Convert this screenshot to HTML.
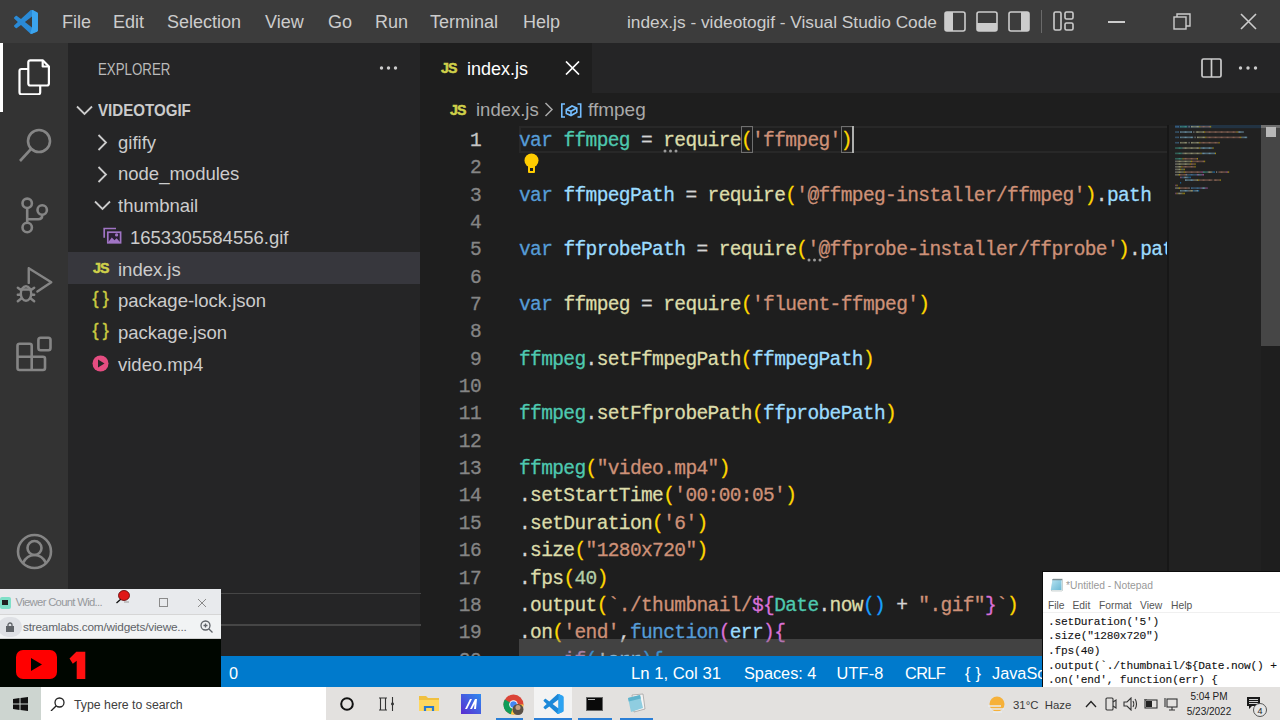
<!DOCTYPE html>
<html><head><meta charset="utf-8">
<style>
*{margin:0;padding:0;box-sizing:border-box}
html,body{width:1280px;height:720px;overflow:hidden;background:#1e1e1e;font-family:"Liberation Sans",sans-serif}
.a{position:absolute}
#title{left:0;top:0;width:1280px;height:43px;background:#3c3c3c}
.menu{top:0;height:42px;line-height:44px;font-size:18px;color:#cccccc;white-space:nowrap}
#act{left:0;top:43px;width:68px;height:613px;background:#333333}
#side{left:68px;top:43px;width:352px;height:613px;background:#252526}
.row{left:68px;width:352px;height:31.7px;line-height:31.7px;font-size:18.5px;color:#cccccc;white-space:nowrap;padding-top:2.1px}
#tabs{left:420px;top:43px;width:860px;height:50px;background:#252526}
#tab{left:420px;top:43px;width:172px;height:50px;background:#1e1e1e}
.code{font-family:"Liberation Mono",monospace;font-size:19.5px;letter-spacing:-0.61px;line-height:27.37px;-webkit-text-stroke:0.3px}
.code>div{white-space:pre;height:27.37px}
.ln{left:420px;width:61px;text-align:right;color:#858585}
.k{color:#569cd6}.t{color:#4ec9b0}.v{color:#9cdcfe}.f{color:#dcdcaa}.s{color:#ce9178}.p{color:#d4d4d4}.b1{color:#ffd700}.b2{color:#da70d6}.b3{color:#179fff}.n{color:#b5cea8}.c{color:#c586c0}
#status{left:0;top:656px;width:1280px;height:31px;background:#007acc}
.st{top:656px;height:31px;line-height:35px;font-size:16.3px;color:#ffffff;white-space:nowrap}
#task{left:0;top:687px;width:1280px;height:33px;background:#e3e1df}
</style></head><body>

<!-- title bar -->
<div id="title" class="a"></div>
<svg class="a" style="left:13.5px;top:9.5px" width="24" height="24" viewBox="0 0 100 100">
<path fill="#2a8ad6" d="M96 11 75 1c-2.4-1.2-5.3-.7-7.2 1.2L29 37.5 12.2 24.8c-1.6-1.2-3.8-1.1-5.2.2L1.5 30c-1.8 1.6-1.8 4.4 0 6L16 49.9 1.5 63.7c-1.8 1.6-1.8 4.4 0 6l5.5 5c1.5 1.3 3.7 1.4 5.2.2L29 62.2l38.8 35.4c1.9 1.9 4.8 2.4 7.2 1.2l21-10.1c2.2-1 3.6-3.3 3.6-5.7V16.8c0-2.5-1.4-4.7-3.6-5.8zM75 72.7 45.5 49.9 75 27z"/>
<path fill="#3ba4ee" d="M75 1c2.4-1.2 5.3-.7 7.2 1.2l14 6.8c2.2 1 3.6 3.3 3.6 5.7v70c0 2.5-1.4 4.7-3.6 5.8L75 99c-2.4 1.2-5.3.7-7.2-1.2L75 72.7V27z"/>
</svg>
<div class="a menu" style="left:62px">File</div>
<div class="a menu" style="left:113px">Edit</div>
<div class="a menu" style="left:167px">Selection</div>
<div class="a menu" style="left:265px">View</div>
<div class="a menu" style="left:328px">Go</div>
<div class="a menu" style="left:375px">Run</div>
<div class="a menu" style="left:430px">Terminal</div>
<div class="a menu" style="left:523px">Help</div>
<div class="a menu" style="left:627px;font-size:17.3px">index.js - videotogif - Visual Studio Code</div>
<!-- layout icons -->
<svg class="a" style="left:944px;top:11px" width="22" height="21" viewBox="0 0 22 21"><rect x="1" y="1" width="20" height="19" rx="2" fill="none" stroke="#cccccc" stroke-width="1.6"/><rect x="1" y="1" width="8" height="19" fill="#cccccc"/></svg>
<svg class="a" style="left:976px;top:11px" width="22" height="21" viewBox="0 0 22 21"><rect x="1" y="1" width="20" height="19" rx="2" fill="none" stroke="#cccccc" stroke-width="1.6"/><rect x="1" y="12" width="20" height="8" fill="#cccccc"/></svg>
<svg class="a" style="left:1008px;top:11px" width="22" height="21" viewBox="0 0 22 21"><rect x="1" y="1" width="20" height="19" rx="2" fill="none" stroke="#cccccc" stroke-width="1.6"/><rect x="13" y="1" width="8" height="19" fill="#cccccc"/></svg>
<div class="a" style="left:1041px;top:10px;width:1px;height:23px;background:#6a6a6a"></div>
<svg class="a" style="left:1053px;top:11px" width="22" height="20" viewBox="0 0 22 20"><rect x="1" y="1" width="7" height="18" rx="1.5" fill="none" stroke="#cccccc" stroke-width="1.6"/><rect x="12" y="1" width="8" height="7" rx="1.5" fill="none" stroke="#cccccc" stroke-width="1.6"/><rect x="12" y="12" width="8" height="7" rx="1.5" fill="none" stroke="#cccccc" stroke-width="1.6"/></svg>
<div class="a" style="left:1108px;top:21px;width:17px;height:1.5px;background:#cccccc"></div>
<svg class="a" style="left:1173px;top:13px" width="18" height="17" viewBox="0 0 18 17"><rect x="1" y="4" width="12" height="12" fill="none" stroke="#cccccc" stroke-width="1.4"/><path d="M4 4V1h13v12h-4" fill="none" stroke="#cccccc" stroke-width="1.4"/></svg>
<svg class="a" style="left:1240px;top:13px" width="17" height="17" viewBox="0 0 17 17"><path d="M1 1 16 16M16 1 1 16" stroke="#cccccc" stroke-width="1.6"/></svg>

<!-- activity bar -->
<div id="act" class="a"></div>
<div class="a" style="left:0;top:43px;width:3px;height:69px;background:#ffffff"></div>
<!-- explorer icon -->
<svg class="a" style="left:18px;top:59px" width="32" height="36" viewBox="0 0 32 36" fill="none" stroke="#ffffff" stroke-width="2.2" stroke-linejoin="round">
<path d="M12.3 1.3h12.4l6.2 6.2v17a2 2 0 0 1-2 2H12.3a2 2 0 0 1-2-2V3.3a2 2 0 0 1 2-2z"/><path d="M24.7 1.3v6.2h6.2"/><path d="M10.3 10H3.5a2 2 0 0 0-2 2v21.3a2 2 0 0 0 2 2h16.7a2 2 0 0 0 2-2v-6.8"/>
</svg>
<!-- search -->
<svg class="a" style="left:16px;top:126px" width="38" height="38" viewBox="0 0 38 38" fill="none" stroke="#858585" stroke-width="2.6">
<circle cx="23" cy="15" r="11"/><path d="M15 23 4 35"/>
</svg>
<!-- source control -->
<svg class="a" style="left:16px;top:193px" width="36" height="42" viewBox="0 0 36 42" fill="none" stroke="#858585" stroke-width="2.6">
<circle cx="11.2" cy="10.3" r="4.7"/><circle cx="11.2" cy="34.5" r="4.7"/><circle cx="26.2" cy="17" r="4.7"/><path d="M11.2 15v14.8"/><path d="M26.2 21.7v.8c0 2.5-1.5 3.7-4 3.7H11.2"/>
</svg>
<!-- run debug -->
<svg class="a" style="left:15px;top:265px" width="40" height="40" viewBox="0 0 40 40" fill="none" stroke="#858585" stroke-width="2.4" stroke-linejoin="round" stroke-linecap="round">
<path d="M13.75 3.3V17.9M13.75 3.3 36.3 17.2 22.4 26.6"/>
<ellipse cx="11" cy="28.5" rx="5.2" ry="7.3"/><path d="M6 24.5H16M2.8 22.8 6.3 25.3M2.8 29.7H5.8M2.8 36.3 6.3 33.5M19.2 22.8 15.7 25.3M19.2 29.7H16.2M19.2 36.3 15.7 33.5"/>
</svg>
<!-- extensions -->
<svg class="a" style="left:16px;top:335px" width="38" height="38" viewBox="0 0 38 38" fill="none" stroke="#858585" stroke-width="2.6" stroke-linejoin="round">
<path d="M3.5 8.7h10.2a2 2 0 0 1 2 2v11h11.3a2 2 0 0 1 2 2V33a2 2 0 0 1-2 2H3.5a2 2 0 0 1-2-2V10.7a2 2 0 0 1 2-2z"/><path d="M1.5 21.7h14.2V35"/><rect x="22.4" y="2.8" width="12.1" height="12.4" rx="2.2"/>
</svg>
<!-- accounts -->
<svg class="a" style="left:16px;top:533px" width="37" height="37" viewBox="0 0 37 37" fill="none" stroke="#858585" stroke-width="2.6">
<circle cx="18.5" cy="18.5" r="16.5"/><circle cx="18.5" cy="15" r="7"/><path d="M7 30c3-6 7-8 11.5-8s8.5 2 11.5 8"/>
</svg>

<!-- sidebar -->
<div id="side" class="a"></div>
<div class="a" style="left:98px;top:56px;font-size:16px;color:#bbbbbb;line-height:28px;transform:scaleX(0.83);transform-origin:0 0">EXPLORER</div>
<div class="a" style="left:379px;top:55px;font-size:15px;color:#cccccc;line-height:28px">
<svg width="19" height="28" viewBox="0 0 19 28"><circle cx="2.5" cy="13" r="1.7" fill="#cccccc"/><circle cx="9.5" cy="13" r="1.7" fill="#cccccc"/><circle cx="16.5" cy="13" r="1.7" fill="#cccccc"/></svg></div>
<div class="a" style="left:68px;top:251.6px;width:352px;height:32.2px;background:#37373d"></div>
<div class="a row" style="top:93px;font-weight:bold;font-size:16.5px;padding-left:30px"><span style="display:inline-block;transform:scaleX(0.915);transform-origin:0 0">VIDEOTOGIF</span></div>
<svg class="a" style="left:76px;top:105px" width="17" height="11" viewBox="0 0 17 11"><path d="M1 1.5 8.5 9 16 1.5" fill="none" stroke="#cccccc" stroke-width="1.8"/></svg>
<div class="a row" style="top:124.7px;padding-left:50px">gifify</div>
<svg class="a" style="left:97px;top:134px" width="11" height="17" viewBox="0 0 11 17"><path d="M1.5 1 9 8.5 1.5 16" fill="none" stroke="#cccccc" stroke-width="1.8"/></svg>
<div class="a row" style="top:156.4px;padding-left:50px">node_modules</div>
<svg class="a" style="left:97px;top:166px" width="11" height="17" viewBox="0 0 11 17"><path d="M1.5 1 9 8.5 1.5 16" fill="none" stroke="#cccccc" stroke-width="1.8"/></svg>
<div class="a row" style="top:188.1px;padding-left:50px">thumbnail</div>
<svg class="a" style="left:94px;top:200px" width="17" height="11" viewBox="0 0 17 11"><path d="M1 1.5 8.5 9 16 1.5" fill="none" stroke="#cccccc" stroke-width="1.8"/></svg>
<div class="a row" style="top:219.8px;padding-left:62px">1653305584556.gif</div>
<svg class="a" style="left:103px;top:227px" width="19" height="17" viewBox="0 0 19 17"><path d="M1.2 10.8V1.5H13" fill="none" stroke="#a074c4" stroke-width="1.7"/><rect x="4.8" y="5.2" width="12.8" height="10.6" fill="#2a1f33" stroke="#a074c4" stroke-width="1.7"/><path d="M5 15.5 8.8 10.5 11.5 13.3 13.6 11.3 17.4 15.5z" fill="#a074c4"/><circle cx="13.6" cy="7.9" r="1.6" fill="#a074c4"/></svg>
<div class="a row" style="top:251.5px;padding-left:50px">index.js</div>
<div class="a" style="left:93px;top:258px;font-size:14.2px;font-weight:bold;color:#cfd04a;line-height:20px;letter-spacing:-1px;-webkit-text-stroke:.5px #cfd04a">JS</div>
<div class="a row" style="top:283.2px;padding-left:50px">package-lock.json</div>
<div class="a" style="left:92.5px;top:286px;font-size:18px;color:#cbcb41;line-height:24px;letter-spacing:4.3px;-webkit-text-stroke:.4px #cbcb41">{}</div>
<div class="a row" style="top:314.9px;padding-left:50px">package.json</div>
<div class="a" style="left:92.5px;top:317.7px;font-size:18px;color:#cbcb41;line-height:24px;letter-spacing:4.3px;-webkit-text-stroke:.4px #cbcb41">{}</div>
<div class="a row" style="top:346.6px;padding-left:50px">video.mp4</div>
<svg class="a" style="left:92px;top:355px" width="17" height="17" viewBox="0 0 17 17"><circle cx="8.5" cy="8.5" r="8" fill="#e54d81"/><path d="M6 4.5v8l6.5-4z" fill="#252526"/></svg>
<!-- section separators -->
<div class="a" style="left:68px;top:592.7px;width:353px;height:1.5px;background:#464646"></div>
<div class="a" style="left:68px;top:624px;width:353px;height:1.5px;background:#464646"></div>

<!-- editor tabs -->
<div id="tabs" class="a"></div>
<div id="tab" class="a"></div>
<div class="a" style="left:441px;top:58px;font-size:14.2px;font-weight:bold;color:#cfd04a;line-height:20px;letter-spacing:-1px;-webkit-text-stroke:.5px #cfd04a">JS</div>
<div class="a" style="left:467px;top:54px;font-size:18px;color:#ffffff;line-height:30px">index.js</div>
<svg class="a" style="left:565px;top:61px" width="15" height="14" viewBox="0 0 15 14"><path d="M1 .5 14 13.5M14 .5 1 13.5" stroke="#ffffff" stroke-width="1.7"/></svg>
<!-- split / more -->
<svg class="a" style="left:1201px;top:58px" width="21" height="20" viewBox="0 0 21 20" fill="none" stroke="#cccccc" stroke-width="1.7"><rect x="1" y="1" width="19" height="18" rx="1.5"/><path d="M10.5 1v18"/></svg>
<svg class="a" style="left:1238px;top:60px" width="20" height="16" viewBox="0 0 20 16"><circle cx="2.5" cy="8" r="1.7" fill="#cccccc"/><circle cx="10" cy="8" r="1.7" fill="#cccccc"/><circle cx="17.5" cy="8" r="1.7" fill="#cccccc"/></svg>
<!-- breadcrumbs -->
<div class="a" style="left:450px;top:100px;font-size:14.2px;font-weight:bold;color:#cfd04a;line-height:20px;letter-spacing:-1px;-webkit-text-stroke:.5px #cfd04a">JS</div>
<div class="a" style="left:476px;top:95px;font-size:18.5px;color:#a9a9a9;line-height:30px">index.js</div>
<svg class="a" style="left:544px;top:102px" width="10" height="15" viewBox="0 0 10 15"><path d="M1.5 1 8 7.5 1.5 14" fill="none" stroke="#a9a9a9" stroke-width="1.5"/></svg>
<svg class="a" style="left:560px;top:102.5px" width="23" height="15" viewBox="0 0 23 15" fill="none" stroke="#75beff" stroke-width="1.6"><path d="M5 1H1.8v13H5M17.5 1h3.2v13h-3.2"/><path d="M6.3 6.5 12 3l4.8 2v4.3L11 12.5 6.3 10.5z"/><path d="M6.3 6.5 11 8.3l5.8-3.3M11 8.3v4.2"/></svg>
<div class="a" style="left:588px;top:95px;font-size:19px;color:#a9a9a9;line-height:30px">ffmpeg</div>

<!-- current line border -->
<div class="a" style="left:519px;top:126px;width:651px;height:27px;border:2px solid #282828"></div>
<!-- line numbers -->
<div class="a code ln" style="top:127.8px">
<div style="color:#c6c6c6">1</div><div>2</div><div>3</div><div>4</div><div>5</div><div>6</div><div>7</div><div>8</div><div>9</div><div>10</div><div>11</div><div>12</div><div>13</div><div>14</div><div>15</div><div>16</div><div>17</div><div>18</div><div>19</div><div>20</div>
</div>
<!-- code -->
<div class="a code p" style="left:519px;top:127.8px;width:651px;height:528.2px;overflow:hidden">
<div><span class="k">var</span> <span class="t">ffmpeg</span> = <span class="f">require</span><span class="b1">(</span><span class="s">'ffmpeg'</span><span class="b1">)</span></div>
<div> </div>
<div><span class="k">var</span> <span class="v">ffmpegPath</span> = <span class="f">require</span><span class="b1">(</span><span class="s">'@ffmpeg-installer/ffmpeg'</span><span class="b1">)</span>.<span class="v">path</span></div>
<div> </div>
<div><span class="k">var</span> <span class="v">ffprobePath</span> = <span class="f">require</span><span class="b1">(</span><span class="s">'@ffprobe-installer/ffprobe'</span><span class="b1">)</span>.<span class="v">path</span></div>
<div> </div>
<div><span class="k">var</span> <span class="f">ffmpeg</span> = <span class="f">require</span><span class="b1">(</span><span class="s">'fluent-ffmpeg'</span><span class="b1">)</span></div>
<div> </div>
<div><span class="t">ffmpeg</span>.<span class="f">setFfmpegPath</span><span class="b1">(</span><span class="v">ffmpegPath</span><span class="b1">)</span></div>
<div> </div>
<div><span class="t">ffmpeg</span>.<span class="f">setFfprobePath</span><span class="b1">(</span><span class="v">ffprobePath</span><span class="b1">)</span></div>
<div> </div>
<div><span class="t">ffmpeg</span><span class="b1">(</span><span class="s">"video.mp4"</span><span class="b1">)</span></div>
<div>.<span class="f">setStartTime</span><span class="b1">(</span><span class="s">'00:00:05'</span><span class="b1">)</span></div>
<div>.<span class="f">setDuration</span><span class="b1">(</span><span class="s">'6'</span><span class="b1">)</span></div>
<div>.<span class="f">size</span><span class="b1">(</span><span class="s">"1280x720"</span><span class="b1">)</span></div>
<div>.<span class="f">fps</span><span class="b1">(</span><span class="n">40</span><span class="b1">)</span></div>
<div>.<span class="f">output</span><span class="b1">(</span><span class="s">`./thumbnail/</span><span class="b2">${</span><span class="t">Date</span>.<span class="f">now</span><span class="b3">()</span> + <span class="s">".gif"</span><span class="b2">}</span><span class="s">`</span><span class="b1">)</span></div>
<div>.<span class="f">on</span><span class="b1">(</span><span class="s">'end'</span>,<span class="k">function</span><span class="b2">(</span><span class="v">err</span><span class="b2">){</span></div>
<div>    <span class="c">if</span><span class="b3">(</span>!<span class="v">err</span><span class="b3">){</span></div>
</div>
<svg class="a" style="left:663px;top:148.5px" width="16" height="4" viewBox="0 0 16 4"><circle cx="2" cy="2" r="1.5" fill="#999999"/><circle cx="7.5" cy="2" r="1.5" fill="#999999"/><circle cx="13" cy="2" r="1.5" fill="#999999"/></svg>
<svg class="a" style="left:807px;top:257.5px" width="16" height="4" viewBox="0 0 16 4"><circle cx="2" cy="2" r="1.5" fill="#999999"/><circle cx="7.5" cy="2" r="1.5" fill="#999999"/><circle cx="13" cy="2" r="1.5" fill="#999999"/></svg>
<!-- bracket match boxes -->
<div class="a" style="left:741px;top:125.5px;width:12px;height:27px;border:1.5px solid #6f6f6f"></div>
<div class="a" style="left:840.5px;top:125.5px;width:12.5px;height:27px;border:1.5px solid #6f6f6f"></div>
<div class="a" style="left:851.5px;top:125.5px;width:2.5px;height:27px;background:#aeafad"></div>
<!-- lightbulb -->
<svg class="a" style="left:524px;top:153px" width="15" height="21" viewBox="0 0 15 21"><circle cx="7.5" cy="7.5" r="7" fill="#ffcc00"/><rect x="4" y="11" width="7" height="9" rx="1" fill="#ffcc00"/><rect x="6" y="15" width="3" height="3" fill="#1e1e1e"/></svg>
<!-- horizontal scrollbar shadow -->
<div class="a" style="left:519px;top:639px;width:651px;height:17px;background:rgba(121,121,121,0.4)"></div>
<!-- minimap -->
<div class="a" style="left:1167px;top:125px;width:2px;height:531px;background:#171717"></div>
<div class="a" style="left:1169px;top:125px;width:92px;height:531px;background:#212121"></div>
<svg class="a" style="left:1169px;top:125px" width="92" height="80" viewBox="0 0 92 80"><rect x="6" y="0" width="86" height="3.2" fill="#264f78" opacity=".4"/><g opacity=".6"><rect x="6.40" y="0.90" width="0.95" height="1.6" fill="#569cd6"/><rect x="7.60" y="0.90" width="0.95" height="1.6" fill="#569cd6"/><rect x="8.80" y="0.90" width="0.95" height="1.6" fill="#569cd6"/><rect x="11.20" y="0.90" width="0.95" height="1.6" fill="#4ec9b0"/><rect x="12.40" y="0.90" width="0.95" height="1.6" fill="#4ec9b0"/><rect x="13.60" y="0.90" width="0.95" height="1.6" fill="#4ec9b0"/><rect x="14.80" y="0.90" width="0.95" height="1.6" fill="#4ec9b0"/><rect x="16.00" y="0.90" width="0.95" height="1.6" fill="#4ec9b0"/><rect x="17.20" y="0.90" width="0.95" height="1.6" fill="#4ec9b0"/><rect x="19.60" y="0.90" width="0.95" height="1.6" fill="#d4d4d4"/><rect x="22.00" y="0.90" width="0.95" height="1.6" fill="#dcdcaa"/><rect x="23.20" y="0.90" width="0.95" height="1.6" fill="#dcdcaa"/><rect x="24.40" y="0.90" width="0.95" height="1.6" fill="#dcdcaa"/><rect x="25.60" y="0.90" width="0.95" height="1.6" fill="#dcdcaa"/><rect x="26.80" y="0.90" width="0.95" height="1.6" fill="#dcdcaa"/><rect x="28.00" y="0.90" width="0.95" height="1.6" fill="#dcdcaa"/><rect x="29.20" y="0.90" width="0.95" height="1.6" fill="#dcdcaa"/><rect x="30.40" y="0.90" width="0.95" height="1.6" fill="#ffd700"/><rect x="31.60" y="0.90" width="0.95" height="1.6" fill="#ce9178"/><rect x="32.80" y="0.90" width="0.95" height="1.6" fill="#ce9178"/><rect x="34.00" y="0.90" width="0.95" height="1.6" fill="#ce9178"/><rect x="35.20" y="0.90" width="0.95" height="1.6" fill="#ce9178"/><rect x="36.40" y="0.90" width="0.95" height="1.6" fill="#ce9178"/><rect x="37.60" y="0.90" width="0.95" height="1.6" fill="#ce9178"/><rect x="38.80" y="0.90" width="0.95" height="1.6" fill="#ce9178"/><rect x="40.00" y="0.90" width="0.95" height="1.6" fill="#ce9178"/><rect x="41.20" y="0.90" width="0.95" height="1.6" fill="#ffd700"/><rect x="6.40" y="6.24" width="0.95" height="1.6" fill="#569cd6"/><rect x="7.60" y="6.24" width="0.95" height="1.6" fill="#569cd6"/><rect x="8.80" y="6.24" width="0.95" height="1.6" fill="#569cd6"/><rect x="11.20" y="6.24" width="0.95" height="1.6" fill="#9cdcfe"/><rect x="12.40" y="6.24" width="0.95" height="1.6" fill="#9cdcfe"/><rect x="13.60" y="6.24" width="0.95" height="1.6" fill="#9cdcfe"/><rect x="14.80" y="6.24" width="0.95" height="1.6" fill="#9cdcfe"/><rect x="16.00" y="6.24" width="0.95" height="1.6" fill="#9cdcfe"/><rect x="17.20" y="6.24" width="0.95" height="1.6" fill="#9cdcfe"/><rect x="18.40" y="6.24" width="0.95" height="1.6" fill="#9cdcfe"/><rect x="19.60" y="6.24" width="0.95" height="1.6" fill="#9cdcfe"/><rect x="20.80" y="6.24" width="0.95" height="1.6" fill="#9cdcfe"/><rect x="22.00" y="6.24" width="0.95" height="1.6" fill="#9cdcfe"/><rect x="24.40" y="6.24" width="0.95" height="1.6" fill="#d4d4d4"/><rect x="26.80" y="6.24" width="0.95" height="1.6" fill="#dcdcaa"/><rect x="28.00" y="6.24" width="0.95" height="1.6" fill="#dcdcaa"/><rect x="29.20" y="6.24" width="0.95" height="1.6" fill="#dcdcaa"/><rect x="30.40" y="6.24" width="0.95" height="1.6" fill="#dcdcaa"/><rect x="31.60" y="6.24" width="0.95" height="1.6" fill="#dcdcaa"/><rect x="32.80" y="6.24" width="0.95" height="1.6" fill="#dcdcaa"/><rect x="34.00" y="6.24" width="0.95" height="1.6" fill="#dcdcaa"/><rect x="35.20" y="6.24" width="0.95" height="1.6" fill="#ffd700"/><rect x="36.40" y="6.24" width="0.95" height="1.6" fill="#ce9178"/><rect x="37.60" y="6.24" width="0.95" height="1.6" fill="#ce9178"/><rect x="38.80" y="6.24" width="0.95" height="1.6" fill="#ce9178"/><rect x="40.00" y="6.24" width="0.95" height="1.6" fill="#ce9178"/><rect x="41.20" y="6.24" width="0.95" height="1.6" fill="#ce9178"/><rect x="42.40" y="6.24" width="0.95" height="1.6" fill="#ce9178"/><rect x="43.60" y="6.24" width="0.95" height="1.6" fill="#ce9178"/><rect x="44.80" y="6.24" width="0.95" height="1.6" fill="#ce9178"/><rect x="46.00" y="6.24" width="0.95" height="1.6" fill="#ce9178"/><rect x="47.20" y="6.24" width="0.95" height="1.6" fill="#ce9178"/><rect x="48.40" y="6.24" width="0.95" height="1.6" fill="#ce9178"/><rect x="49.60" y="6.24" width="0.95" height="1.6" fill="#ce9178"/><rect x="50.80" y="6.24" width="0.95" height="1.6" fill="#ce9178"/><rect x="52.00" y="6.24" width="0.95" height="1.6" fill="#ce9178"/><rect x="53.20" y="6.24" width="0.95" height="1.6" fill="#ce9178"/><rect x="54.40" y="6.24" width="0.95" height="1.6" fill="#ce9178"/><rect x="55.60" y="6.24" width="0.95" height="1.6" fill="#ce9178"/><rect x="56.80" y="6.24" width="0.95" height="1.6" fill="#ce9178"/><rect x="58.00" y="6.24" width="0.95" height="1.6" fill="#ce9178"/><rect x="59.20" y="6.24" width="0.95" height="1.6" fill="#ce9178"/><rect x="60.40" y="6.24" width="0.95" height="1.6" fill="#ce9178"/><rect x="61.60" y="6.24" width="0.95" height="1.6" fill="#ce9178"/><rect x="62.80" y="6.24" width="0.95" height="1.6" fill="#ce9178"/><rect x="64.00" y="6.24" width="0.95" height="1.6" fill="#ce9178"/><rect x="65.20" y="6.24" width="0.95" height="1.6" fill="#ce9178"/><rect x="66.40" y="6.24" width="0.95" height="1.6" fill="#ce9178"/><rect x="67.60" y="6.24" width="0.95" height="1.6" fill="#ffd700"/><rect x="68.80" y="6.24" width="0.95" height="1.6" fill="#d4d4d4"/><rect x="70.00" y="6.24" width="0.95" height="1.6" fill="#9cdcfe"/><rect x="71.20" y="6.24" width="0.95" height="1.6" fill="#9cdcfe"/><rect x="72.40" y="6.24" width="0.95" height="1.6" fill="#9cdcfe"/><rect x="73.60" y="6.24" width="0.95" height="1.6" fill="#9cdcfe"/><rect x="6.40" y="11.58" width="0.95" height="1.6" fill="#569cd6"/><rect x="7.60" y="11.58" width="0.95" height="1.6" fill="#569cd6"/><rect x="8.80" y="11.58" width="0.95" height="1.6" fill="#569cd6"/><rect x="11.20" y="11.58" width="0.95" height="1.6" fill="#9cdcfe"/><rect x="12.40" y="11.58" width="0.95" height="1.6" fill="#9cdcfe"/><rect x="13.60" y="11.58" width="0.95" height="1.6" fill="#9cdcfe"/><rect x="14.80" y="11.58" width="0.95" height="1.6" fill="#9cdcfe"/><rect x="16.00" y="11.58" width="0.95" height="1.6" fill="#9cdcfe"/><rect x="17.20" y="11.58" width="0.95" height="1.6" fill="#9cdcfe"/><rect x="18.40" y="11.58" width="0.95" height="1.6" fill="#9cdcfe"/><rect x="19.60" y="11.58" width="0.95" height="1.6" fill="#9cdcfe"/><rect x="20.80" y="11.58" width="0.95" height="1.6" fill="#9cdcfe"/><rect x="22.00" y="11.58" width="0.95" height="1.6" fill="#9cdcfe"/><rect x="23.20" y="11.58" width="0.95" height="1.6" fill="#9cdcfe"/><rect x="25.60" y="11.58" width="0.95" height="1.6" fill="#d4d4d4"/><rect x="28.00" y="11.58" width="0.95" height="1.6" fill="#dcdcaa"/><rect x="29.20" y="11.58" width="0.95" height="1.6" fill="#dcdcaa"/><rect x="30.40" y="11.58" width="0.95" height="1.6" fill="#dcdcaa"/><rect x="31.60" y="11.58" width="0.95" height="1.6" fill="#dcdcaa"/><rect x="32.80" y="11.58" width="0.95" height="1.6" fill="#dcdcaa"/><rect x="34.00" y="11.58" width="0.95" height="1.6" fill="#dcdcaa"/><rect x="35.20" y="11.58" width="0.95" height="1.6" fill="#dcdcaa"/><rect x="36.40" y="11.58" width="0.95" height="1.6" fill="#ffd700"/><rect x="37.60" y="11.58" width="0.95" height="1.6" fill="#ce9178"/><rect x="38.80" y="11.58" width="0.95" height="1.6" fill="#ce9178"/><rect x="40.00" y="11.58" width="0.95" height="1.6" fill="#ce9178"/><rect x="41.20" y="11.58" width="0.95" height="1.6" fill="#ce9178"/><rect x="42.40" y="11.58" width="0.95" height="1.6" fill="#ce9178"/><rect x="43.60" y="11.58" width="0.95" height="1.6" fill="#ce9178"/><rect x="44.80" y="11.58" width="0.95" height="1.6" fill="#ce9178"/><rect x="46.00" y="11.58" width="0.95" height="1.6" fill="#ce9178"/><rect x="47.20" y="11.58" width="0.95" height="1.6" fill="#ce9178"/><rect x="48.40" y="11.58" width="0.95" height="1.6" fill="#ce9178"/><rect x="49.60" y="11.58" width="0.95" height="1.6" fill="#ce9178"/><rect x="50.80" y="11.58" width="0.95" height="1.6" fill="#ce9178"/><rect x="52.00" y="11.58" width="0.95" height="1.6" fill="#ce9178"/><rect x="53.20" y="11.58" width="0.95" height="1.6" fill="#ce9178"/><rect x="54.40" y="11.58" width="0.95" height="1.6" fill="#ce9178"/><rect x="55.60" y="11.58" width="0.95" height="1.6" fill="#ce9178"/><rect x="56.80" y="11.58" width="0.95" height="1.6" fill="#ce9178"/><rect x="58.00" y="11.58" width="0.95" height="1.6" fill="#ce9178"/><rect x="59.20" y="11.58" width="0.95" height="1.6" fill="#ce9178"/><rect x="60.40" y="11.58" width="0.95" height="1.6" fill="#ce9178"/><rect x="61.60" y="11.58" width="0.95" height="1.6" fill="#ce9178"/><rect x="62.80" y="11.58" width="0.95" height="1.6" fill="#ce9178"/><rect x="64.00" y="11.58" width="0.95" height="1.6" fill="#ce9178"/><rect x="65.20" y="11.58" width="0.95" height="1.6" fill="#ce9178"/><rect x="66.40" y="11.58" width="0.95" height="1.6" fill="#ce9178"/><rect x="67.60" y="11.58" width="0.95" height="1.6" fill="#ce9178"/><rect x="68.80" y="11.58" width="0.95" height="1.6" fill="#ce9178"/><rect x="70.00" y="11.58" width="0.95" height="1.6" fill="#ce9178"/><rect x="71.20" y="11.58" width="0.95" height="1.6" fill="#ffd700"/><rect x="72.40" y="11.58" width="0.95" height="1.6" fill="#d4d4d4"/><rect x="73.60" y="11.58" width="0.95" height="1.6" fill="#9cdcfe"/><rect x="74.80" y="11.58" width="0.95" height="1.6" fill="#9cdcfe"/><rect x="76.00" y="11.58" width="0.95" height="1.6" fill="#9cdcfe"/><rect x="77.20" y="11.58" width="0.95" height="1.6" fill="#9cdcfe"/><rect x="6.40" y="16.92" width="0.95" height="1.6" fill="#569cd6"/><rect x="7.60" y="16.92" width="0.95" height="1.6" fill="#569cd6"/><rect x="8.80" y="16.92" width="0.95" height="1.6" fill="#569cd6"/><rect x="11.20" y="16.92" width="0.95" height="1.6" fill="#dcdcaa"/><rect x="12.40" y="16.92" width="0.95" height="1.6" fill="#dcdcaa"/><rect x="13.60" y="16.92" width="0.95" height="1.6" fill="#dcdcaa"/><rect x="14.80" y="16.92" width="0.95" height="1.6" fill="#dcdcaa"/><rect x="16.00" y="16.92" width="0.95" height="1.6" fill="#dcdcaa"/><rect x="17.20" y="16.92" width="0.95" height="1.6" fill="#dcdcaa"/><rect x="19.60" y="16.92" width="0.95" height="1.6" fill="#d4d4d4"/><rect x="22.00" y="16.92" width="0.95" height="1.6" fill="#dcdcaa"/><rect x="23.20" y="16.92" width="0.95" height="1.6" fill="#dcdcaa"/><rect x="24.40" y="16.92" width="0.95" height="1.6" fill="#dcdcaa"/><rect x="25.60" y="16.92" width="0.95" height="1.6" fill="#dcdcaa"/><rect x="26.80" y="16.92" width="0.95" height="1.6" fill="#dcdcaa"/><rect x="28.00" y="16.92" width="0.95" height="1.6" fill="#dcdcaa"/><rect x="29.20" y="16.92" width="0.95" height="1.6" fill="#dcdcaa"/><rect x="30.40" y="16.92" width="0.95" height="1.6" fill="#ffd700"/><rect x="31.60" y="16.92" width="0.95" height="1.6" fill="#ce9178"/><rect x="32.80" y="16.92" width="0.95" height="1.6" fill="#ce9178"/><rect x="34.00" y="16.92" width="0.95" height="1.6" fill="#ce9178"/><rect x="35.20" y="16.92" width="0.95" height="1.6" fill="#ce9178"/><rect x="36.40" y="16.92" width="0.95" height="1.6" fill="#ce9178"/><rect x="37.60" y="16.92" width="0.95" height="1.6" fill="#ce9178"/><rect x="38.80" y="16.92" width="0.95" height="1.6" fill="#ce9178"/><rect x="40.00" y="16.92" width="0.95" height="1.6" fill="#ce9178"/><rect x="41.20" y="16.92" width="0.95" height="1.6" fill="#ce9178"/><rect x="42.40" y="16.92" width="0.95" height="1.6" fill="#ce9178"/><rect x="43.60" y="16.92" width="0.95" height="1.6" fill="#ce9178"/><rect x="44.80" y="16.92" width="0.95" height="1.6" fill="#ce9178"/><rect x="46.00" y="16.92" width="0.95" height="1.6" fill="#ce9178"/><rect x="47.20" y="16.92" width="0.95" height="1.6" fill="#ce9178"/><rect x="48.40" y="16.92" width="0.95" height="1.6" fill="#ce9178"/><rect x="49.60" y="16.92" width="0.95" height="1.6" fill="#ffd700"/><rect x="6.40" y="22.26" width="0.95" height="1.6" fill="#4ec9b0"/><rect x="7.60" y="22.26" width="0.95" height="1.6" fill="#4ec9b0"/><rect x="8.80" y="22.26" width="0.95" height="1.6" fill="#4ec9b0"/><rect x="10.00" y="22.26" width="0.95" height="1.6" fill="#4ec9b0"/><rect x="11.20" y="22.26" width="0.95" height="1.6" fill="#4ec9b0"/><rect x="12.40" y="22.26" width="0.95" height="1.6" fill="#4ec9b0"/><rect x="13.60" y="22.26" width="0.95" height="1.6" fill="#d4d4d4"/><rect x="14.80" y="22.26" width="0.95" height="1.6" fill="#dcdcaa"/><rect x="16.00" y="22.26" width="0.95" height="1.6" fill="#dcdcaa"/><rect x="17.20" y="22.26" width="0.95" height="1.6" fill="#dcdcaa"/><rect x="18.40" y="22.26" width="0.95" height="1.6" fill="#dcdcaa"/><rect x="19.60" y="22.26" width="0.95" height="1.6" fill="#dcdcaa"/><rect x="20.80" y="22.26" width="0.95" height="1.6" fill="#dcdcaa"/><rect x="22.00" y="22.26" width="0.95" height="1.6" fill="#dcdcaa"/><rect x="23.20" y="22.26" width="0.95" height="1.6" fill="#dcdcaa"/><rect x="24.40" y="22.26" width="0.95" height="1.6" fill="#dcdcaa"/><rect x="25.60" y="22.26" width="0.95" height="1.6" fill="#dcdcaa"/><rect x="26.80" y="22.26" width="0.95" height="1.6" fill="#dcdcaa"/><rect x="28.00" y="22.26" width="0.95" height="1.6" fill="#dcdcaa"/><rect x="29.20" y="22.26" width="0.95" height="1.6" fill="#dcdcaa"/><rect x="30.40" y="22.26" width="0.95" height="1.6" fill="#ffd700"/><rect x="31.60" y="22.26" width="0.95" height="1.6" fill="#9cdcfe"/><rect x="32.80" y="22.26" width="0.95" height="1.6" fill="#9cdcfe"/><rect x="34.00" y="22.26" width="0.95" height="1.6" fill="#9cdcfe"/><rect x="35.20" y="22.26" width="0.95" height="1.6" fill="#9cdcfe"/><rect x="36.40" y="22.26" width="0.95" height="1.6" fill="#9cdcfe"/><rect x="37.60" y="22.26" width="0.95" height="1.6" fill="#9cdcfe"/><rect x="38.80" y="22.26" width="0.95" height="1.6" fill="#9cdcfe"/><rect x="40.00" y="22.26" width="0.95" height="1.6" fill="#9cdcfe"/><rect x="41.20" y="22.26" width="0.95" height="1.6" fill="#9cdcfe"/><rect x="42.40" y="22.26" width="0.95" height="1.6" fill="#9cdcfe"/><rect x="43.60" y="22.26" width="0.95" height="1.6" fill="#ffd700"/><rect x="6.40" y="27.60" width="0.95" height="1.6" fill="#4ec9b0"/><rect x="7.60" y="27.60" width="0.95" height="1.6" fill="#4ec9b0"/><rect x="8.80" y="27.60" width="0.95" height="1.6" fill="#4ec9b0"/><rect x="10.00" y="27.60" width="0.95" height="1.6" fill="#4ec9b0"/><rect x="11.20" y="27.60" width="0.95" height="1.6" fill="#4ec9b0"/><rect x="12.40" y="27.60" width="0.95" height="1.6" fill="#4ec9b0"/><rect x="13.60" y="27.60" width="0.95" height="1.6" fill="#d4d4d4"/><rect x="14.80" y="27.60" width="0.95" height="1.6" fill="#dcdcaa"/><rect x="16.00" y="27.60" width="0.95" height="1.6" fill="#dcdcaa"/><rect x="17.20" y="27.60" width="0.95" height="1.6" fill="#dcdcaa"/><rect x="18.40" y="27.60" width="0.95" height="1.6" fill="#dcdcaa"/><rect x="19.60" y="27.60" width="0.95" height="1.6" fill="#dcdcaa"/><rect x="20.80" y="27.60" width="0.95" height="1.6" fill="#dcdcaa"/><rect x="22.00" y="27.60" width="0.95" height="1.6" fill="#dcdcaa"/><rect x="23.20" y="27.60" width="0.95" height="1.6" fill="#dcdcaa"/><rect x="24.40" y="27.60" width="0.95" height="1.6" fill="#dcdcaa"/><rect x="25.60" y="27.60" width="0.95" height="1.6" fill="#dcdcaa"/><rect x="26.80" y="27.60" width="0.95" height="1.6" fill="#dcdcaa"/><rect x="28.00" y="27.60" width="0.95" height="1.6" fill="#dcdcaa"/><rect x="29.20" y="27.60" width="0.95" height="1.6" fill="#dcdcaa"/><rect x="30.40" y="27.60" width="0.95" height="1.6" fill="#dcdcaa"/><rect x="31.60" y="27.60" width="0.95" height="1.6" fill="#ffd700"/><rect x="32.80" y="27.60" width="0.95" height="1.6" fill="#9cdcfe"/><rect x="34.00" y="27.60" width="0.95" height="1.6" fill="#9cdcfe"/><rect x="35.20" y="27.60" width="0.95" height="1.6" fill="#9cdcfe"/><rect x="36.40" y="27.60" width="0.95" height="1.6" fill="#9cdcfe"/><rect x="37.60" y="27.60" width="0.95" height="1.6" fill="#9cdcfe"/><rect x="38.80" y="27.60" width="0.95" height="1.6" fill="#9cdcfe"/><rect x="40.00" y="27.60" width="0.95" height="1.6" fill="#9cdcfe"/><rect x="41.20" y="27.60" width="0.95" height="1.6" fill="#9cdcfe"/><rect x="42.40" y="27.60" width="0.95" height="1.6" fill="#9cdcfe"/><rect x="43.60" y="27.60" width="0.95" height="1.6" fill="#9cdcfe"/><rect x="44.80" y="27.60" width="0.95" height="1.6" fill="#9cdcfe"/><rect x="46.00" y="27.60" width="0.95" height="1.6" fill="#ffd700"/><rect x="6.40" y="32.94" width="0.95" height="1.6" fill="#4ec9b0"/><rect x="7.60" y="32.94" width="0.95" height="1.6" fill="#4ec9b0"/><rect x="8.80" y="32.94" width="0.95" height="1.6" fill="#4ec9b0"/><rect x="10.00" y="32.94" width="0.95" height="1.6" fill="#4ec9b0"/><rect x="11.20" y="32.94" width="0.95" height="1.6" fill="#4ec9b0"/><rect x="12.40" y="32.94" width="0.95" height="1.6" fill="#4ec9b0"/><rect x="13.60" y="32.94" width="0.95" height="1.6" fill="#ffd700"/><rect x="14.80" y="32.94" width="0.95" height="1.6" fill="#ce9178"/><rect x="16.00" y="32.94" width="0.95" height="1.6" fill="#ce9178"/><rect x="17.20" y="32.94" width="0.95" height="1.6" fill="#ce9178"/><rect x="18.40" y="32.94" width="0.95" height="1.6" fill="#ce9178"/><rect x="19.60" y="32.94" width="0.95" height="1.6" fill="#ce9178"/><rect x="20.80" y="32.94" width="0.95" height="1.6" fill="#ce9178"/><rect x="22.00" y="32.94" width="0.95" height="1.6" fill="#ce9178"/><rect x="23.20" y="32.94" width="0.95" height="1.6" fill="#ce9178"/><rect x="24.40" y="32.94" width="0.95" height="1.6" fill="#ce9178"/><rect x="25.60" y="32.94" width="0.95" height="1.6" fill="#ce9178"/><rect x="26.80" y="32.94" width="0.95" height="1.6" fill="#ce9178"/><rect x="28.00" y="32.94" width="0.95" height="1.6" fill="#ffd700"/><rect x="6.40" y="35.61" width="0.95" height="1.6" fill="#d4d4d4"/><rect x="7.60" y="35.61" width="0.95" height="1.6" fill="#dcdcaa"/><rect x="8.80" y="35.61" width="0.95" height="1.6" fill="#dcdcaa"/><rect x="10.00" y="35.61" width="0.95" height="1.6" fill="#dcdcaa"/><rect x="11.20" y="35.61" width="0.95" height="1.6" fill="#dcdcaa"/><rect x="12.40" y="35.61" width="0.95" height="1.6" fill="#dcdcaa"/><rect x="13.60" y="35.61" width="0.95" height="1.6" fill="#dcdcaa"/><rect x="14.80" y="35.61" width="0.95" height="1.6" fill="#dcdcaa"/><rect x="16.00" y="35.61" width="0.95" height="1.6" fill="#dcdcaa"/><rect x="17.20" y="35.61" width="0.95" height="1.6" fill="#dcdcaa"/><rect x="18.40" y="35.61" width="0.95" height="1.6" fill="#dcdcaa"/><rect x="19.60" y="35.61" width="0.95" height="1.6" fill="#dcdcaa"/><rect x="20.80" y="35.61" width="0.95" height="1.6" fill="#dcdcaa"/><rect x="22.00" y="35.61" width="0.95" height="1.6" fill="#ffd700"/><rect x="23.20" y="35.61" width="0.95" height="1.6" fill="#ce9178"/><rect x="24.40" y="35.61" width="0.95" height="1.6" fill="#ce9178"/><rect x="25.60" y="35.61" width="0.95" height="1.6" fill="#ce9178"/><rect x="26.80" y="35.61" width="0.95" height="1.6" fill="#ce9178"/><rect x="28.00" y="35.61" width="0.95" height="1.6" fill="#ce9178"/><rect x="29.20" y="35.61" width="0.95" height="1.6" fill="#ce9178"/><rect x="30.40" y="35.61" width="0.95" height="1.6" fill="#ce9178"/><rect x="31.60" y="35.61" width="0.95" height="1.6" fill="#ce9178"/><rect x="32.80" y="35.61" width="0.95" height="1.6" fill="#ce9178"/><rect x="34.00" y="35.61" width="0.95" height="1.6" fill="#ce9178"/><rect x="35.20" y="35.61" width="0.95" height="1.6" fill="#ffd700"/><rect x="6.40" y="38.28" width="0.95" height="1.6" fill="#d4d4d4"/><rect x="7.60" y="38.28" width="0.95" height="1.6" fill="#dcdcaa"/><rect x="8.80" y="38.28" width="0.95" height="1.6" fill="#dcdcaa"/><rect x="10.00" y="38.28" width="0.95" height="1.6" fill="#dcdcaa"/><rect x="11.20" y="38.28" width="0.95" height="1.6" fill="#dcdcaa"/><rect x="12.40" y="38.28" width="0.95" height="1.6" fill="#dcdcaa"/><rect x="13.60" y="38.28" width="0.95" height="1.6" fill="#dcdcaa"/><rect x="14.80" y="38.28" width="0.95" height="1.6" fill="#dcdcaa"/><rect x="16.00" y="38.28" width="0.95" height="1.6" fill="#dcdcaa"/><rect x="17.20" y="38.28" width="0.95" height="1.6" fill="#dcdcaa"/><rect x="18.40" y="38.28" width="0.95" height="1.6" fill="#dcdcaa"/><rect x="19.60" y="38.28" width="0.95" height="1.6" fill="#dcdcaa"/><rect x="20.80" y="38.28" width="0.95" height="1.6" fill="#ffd700"/><rect x="22.00" y="38.28" width="0.95" height="1.6" fill="#ce9178"/><rect x="23.20" y="38.28" width="0.95" height="1.6" fill="#ce9178"/><rect x="24.40" y="38.28" width="0.95" height="1.6" fill="#ce9178"/><rect x="25.60" y="38.28" width="0.95" height="1.6" fill="#ffd700"/><rect x="6.40" y="40.95" width="0.95" height="1.6" fill="#d4d4d4"/><rect x="7.60" y="40.95" width="0.95" height="1.6" fill="#dcdcaa"/><rect x="8.80" y="40.95" width="0.95" height="1.6" fill="#dcdcaa"/><rect x="10.00" y="40.95" width="0.95" height="1.6" fill="#dcdcaa"/><rect x="11.20" y="40.95" width="0.95" height="1.6" fill="#dcdcaa"/><rect x="12.40" y="40.95" width="0.95" height="1.6" fill="#ffd700"/><rect x="13.60" y="40.95" width="0.95" height="1.6" fill="#ce9178"/><rect x="14.80" y="40.95" width="0.95" height="1.6" fill="#ce9178"/><rect x="16.00" y="40.95" width="0.95" height="1.6" fill="#ce9178"/><rect x="17.20" y="40.95" width="0.95" height="1.6" fill="#ce9178"/><rect x="18.40" y="40.95" width="0.95" height="1.6" fill="#ce9178"/><rect x="19.60" y="40.95" width="0.95" height="1.6" fill="#ce9178"/><rect x="20.80" y="40.95" width="0.95" height="1.6" fill="#ce9178"/><rect x="22.00" y="40.95" width="0.95" height="1.6" fill="#ce9178"/><rect x="23.20" y="40.95" width="0.95" height="1.6" fill="#ce9178"/><rect x="24.40" y="40.95" width="0.95" height="1.6" fill="#ce9178"/><rect x="25.60" y="40.95" width="0.95" height="1.6" fill="#ffd700"/><rect x="6.40" y="43.62" width="0.95" height="1.6" fill="#d4d4d4"/><rect x="7.60" y="43.62" width="0.95" height="1.6" fill="#dcdcaa"/><rect x="8.80" y="43.62" width="0.95" height="1.6" fill="#dcdcaa"/><rect x="10.00" y="43.62" width="0.95" height="1.6" fill="#dcdcaa"/><rect x="11.20" y="43.62" width="0.95" height="1.6" fill="#ffd700"/><rect x="12.40" y="43.62" width="0.95" height="1.6" fill="#b5cea8"/><rect x="13.60" y="43.62" width="0.95" height="1.6" fill="#b5cea8"/><rect x="14.80" y="43.62" width="0.95" height="1.6" fill="#ffd700"/><rect x="6.40" y="46.29" width="0.95" height="1.6" fill="#d4d4d4"/><rect x="7.60" y="46.29" width="0.95" height="1.6" fill="#dcdcaa"/><rect x="8.80" y="46.29" width="0.95" height="1.6" fill="#dcdcaa"/><rect x="10.00" y="46.29" width="0.95" height="1.6" fill="#dcdcaa"/><rect x="11.20" y="46.29" width="0.95" height="1.6" fill="#dcdcaa"/><rect x="12.40" y="46.29" width="0.95" height="1.6" fill="#dcdcaa"/><rect x="13.60" y="46.29" width="0.95" height="1.6" fill="#dcdcaa"/><rect x="14.80" y="46.29" width="0.95" height="1.6" fill="#ffd700"/><rect x="16.00" y="46.29" width="0.95" height="1.6" fill="#ce9178"/><rect x="17.20" y="46.29" width="0.95" height="1.6" fill="#ce9178"/><rect x="18.40" y="46.29" width="0.95" height="1.6" fill="#ce9178"/><rect x="19.60" y="46.29" width="0.95" height="1.6" fill="#ce9178"/><rect x="20.80" y="46.29" width="0.95" height="1.6" fill="#ce9178"/><rect x="22.00" y="46.29" width="0.95" height="1.6" fill="#ce9178"/><rect x="23.20" y="46.29" width="0.95" height="1.6" fill="#ce9178"/><rect x="24.40" y="46.29" width="0.95" height="1.6" fill="#ce9178"/><rect x="25.60" y="46.29" width="0.95" height="1.6" fill="#ce9178"/><rect x="26.80" y="46.29" width="0.95" height="1.6" fill="#ce9178"/><rect x="28.00" y="46.29" width="0.95" height="1.6" fill="#ce9178"/><rect x="29.20" y="46.29" width="0.95" height="1.6" fill="#ce9178"/><rect x="30.40" y="46.29" width="0.95" height="1.6" fill="#ce9178"/><rect x="31.60" y="46.29" width="0.95" height="1.6" fill="#da70d6"/><rect x="32.80" y="46.29" width="0.95" height="1.6" fill="#da70d6"/><rect x="34.00" y="46.29" width="0.95" height="1.6" fill="#4ec9b0"/><rect x="35.20" y="46.29" width="0.95" height="1.6" fill="#4ec9b0"/><rect x="36.40" y="46.29" width="0.95" height="1.6" fill="#4ec9b0"/><rect x="37.60" y="46.29" width="0.95" height="1.6" fill="#4ec9b0"/><rect x="38.80" y="46.29" width="0.95" height="1.6" fill="#d4d4d4"/><rect x="40.00" y="46.29" width="0.95" height="1.6" fill="#dcdcaa"/><rect x="41.20" y="46.29" width="0.95" height="1.6" fill="#dcdcaa"/><rect x="42.40" y="46.29" width="0.95" height="1.6" fill="#dcdcaa"/><rect x="43.60" y="46.29" width="0.95" height="1.6" fill="#179fff"/><rect x="44.80" y="46.29" width="0.95" height="1.6" fill="#179fff"/><rect x="47.20" y="46.29" width="0.95" height="1.6" fill="#d4d4d4"/><rect x="49.60" y="46.29" width="0.95" height="1.6" fill="#ce9178"/><rect x="50.80" y="46.29" width="0.95" height="1.6" fill="#ce9178"/><rect x="52.00" y="46.29" width="0.95" height="1.6" fill="#ce9178"/><rect x="53.20" y="46.29" width="0.95" height="1.6" fill="#ce9178"/><rect x="54.40" y="46.29" width="0.95" height="1.6" fill="#ce9178"/><rect x="55.60" y="46.29" width="0.95" height="1.6" fill="#ce9178"/><rect x="56.80" y="46.29" width="0.95" height="1.6" fill="#da70d6"/><rect x="58.00" y="46.29" width="0.95" height="1.6" fill="#ce9178"/><rect x="59.20" y="46.29" width="0.95" height="1.6" fill="#ffd700"/><rect x="6.40" y="48.96" width="0.95" height="1.6" fill="#d4d4d4"/><rect x="7.60" y="48.96" width="0.95" height="1.6" fill="#dcdcaa"/><rect x="8.80" y="48.96" width="0.95" height="1.6" fill="#dcdcaa"/><rect x="10.00" y="48.96" width="0.95" height="1.6" fill="#ffd700"/><rect x="11.20" y="48.96" width="0.95" height="1.6" fill="#ce9178"/><rect x="12.40" y="48.96" width="0.95" height="1.6" fill="#ce9178"/><rect x="13.60" y="48.96" width="0.95" height="1.6" fill="#ce9178"/><rect x="14.80" y="48.96" width="0.95" height="1.6" fill="#ce9178"/><rect x="16.00" y="48.96" width="0.95" height="1.6" fill="#ce9178"/><rect x="17.20" y="48.96" width="0.95" height="1.6" fill="#d4d4d4"/><rect x="18.40" y="48.96" width="0.95" height="1.6" fill="#569cd6"/><rect x="19.60" y="48.96" width="0.95" height="1.6" fill="#569cd6"/><rect x="20.80" y="48.96" width="0.95" height="1.6" fill="#569cd6"/><rect x="22.00" y="48.96" width="0.95" height="1.6" fill="#569cd6"/><rect x="23.20" y="48.96" width="0.95" height="1.6" fill="#569cd6"/><rect x="24.40" y="48.96" width="0.95" height="1.6" fill="#569cd6"/><rect x="25.60" y="48.96" width="0.95" height="1.6" fill="#569cd6"/><rect x="26.80" y="48.96" width="0.95" height="1.6" fill="#569cd6"/><rect x="28.00" y="48.96" width="0.95" height="1.6" fill="#da70d6"/><rect x="29.20" y="48.96" width="0.95" height="1.6" fill="#9cdcfe"/><rect x="30.40" y="48.96" width="0.95" height="1.6" fill="#9cdcfe"/><rect x="31.60" y="48.96" width="0.95" height="1.6" fill="#9cdcfe"/><rect x="32.80" y="48.96" width="0.95" height="1.6" fill="#da70d6"/><rect x="34.00" y="48.96" width="0.95" height="1.6" fill="#da70d6"/><rect x="11.20" y="51.63" width="0.95" height="1.6" fill="#c586c0"/><rect x="12.40" y="51.63" width="0.95" height="1.6" fill="#c586c0"/><rect x="13.60" y="51.63" width="0.95" height="1.6" fill="#179fff"/><rect x="14.80" y="51.63" width="0.95" height="1.6" fill="#d4d4d4"/><rect x="16.00" y="51.63" width="0.95" height="1.6" fill="#9cdcfe"/><rect x="17.20" y="51.63" width="0.95" height="1.6" fill="#9cdcfe"/><rect x="18.40" y="51.63" width="0.95" height="1.6" fill="#9cdcfe"/><rect x="19.60" y="51.63" width="0.95" height="1.6" fill="#179fff"/><rect x="20.80" y="51.63" width="0.95" height="1.6" fill="#179fff"/><rect x="16.00" y="54.30" width="0.95" height="1.6" fill="#9cdcfe"/><rect x="17.20" y="54.30" width="0.95" height="1.6" fill="#9cdcfe"/><rect x="18.40" y="54.30" width="0.95" height="1.6" fill="#9cdcfe"/><rect x="19.60" y="54.30" width="0.95" height="1.6" fill="#9cdcfe"/><rect x="20.80" y="54.30" width="0.95" height="1.6" fill="#9cdcfe"/><rect x="22.00" y="54.30" width="0.95" height="1.6" fill="#9cdcfe"/><rect x="23.20" y="54.30" width="0.95" height="1.6" fill="#9cdcfe"/><rect x="24.40" y="54.30" width="0.95" height="1.6" fill="#d4d4d4"/><rect x="25.60" y="54.30" width="0.95" height="1.6" fill="#dcdcaa"/><rect x="26.80" y="54.30" width="0.95" height="1.6" fill="#dcdcaa"/><rect x="28.00" y="54.30" width="0.95" height="1.6" fill="#dcdcaa"/><rect x="29.20" y="54.30" width="0.95" height="1.6" fill="#ffd700"/><rect x="30.40" y="54.30" width="0.95" height="1.6" fill="#ce9178"/><rect x="31.60" y="54.30" width="0.95" height="1.6" fill="#ce9178"/><rect x="32.80" y="54.30" width="0.95" height="1.6" fill="#ce9178"/><rect x="34.00" y="54.30" width="0.95" height="1.6" fill="#ce9178"/><rect x="35.20" y="54.30" width="0.95" height="1.6" fill="#ce9178"/><rect x="36.40" y="54.30" width="0.95" height="1.6" fill="#ce9178"/><rect x="37.60" y="54.30" width="0.95" height="1.6" fill="#ce9178"/><rect x="38.80" y="54.30" width="0.95" height="1.6" fill="#ce9178"/><rect x="40.00" y="54.30" width="0.95" height="1.6" fill="#ce9178"/><rect x="41.20" y="54.30" width="0.95" height="1.6" fill="#ce9178"/><rect x="42.40" y="54.30" width="0.95" height="1.6" fill="#ce9178"/><rect x="44.80" y="54.30" width="0.95" height="1.6" fill="#ce9178"/><rect x="46.00" y="54.30" width="0.95" height="1.6" fill="#ce9178"/><rect x="47.20" y="54.30" width="0.95" height="1.6" fill="#ce9178"/><rect x="48.40" y="54.30" width="0.95" height="1.6" fill="#ce9178"/><rect x="49.60" y="54.30" width="0.95" height="1.6" fill="#ce9178"/><rect x="50.80" y="54.30" width="0.95" height="1.6" fill="#ffd700"/><rect x="11.20" y="56.97" width="0.95" height="1.6" fill="#179fff"/><rect x="6.40" y="59.64" width="0.95" height="1.6" fill="#da70d6"/><rect x="7.60" y="59.64" width="0.95" height="1.6" fill="#ffd700"/><rect x="6.40" y="62.31" width="0.95" height="1.6" fill="#d4d4d4"/><rect x="7.60" y="62.31" width="0.95" height="1.6" fill="#dcdcaa"/><rect x="8.80" y="62.31" width="0.95" height="1.6" fill="#dcdcaa"/><rect x="10.00" y="62.31" width="0.95" height="1.6" fill="#ffd700"/><rect x="11.20" y="62.31" width="0.95" height="1.6" fill="#ce9178"/><rect x="12.40" y="62.31" width="0.95" height="1.6" fill="#ce9178"/><rect x="13.60" y="62.31" width="0.95" height="1.6" fill="#ce9178"/><rect x="14.80" y="62.31" width="0.95" height="1.6" fill="#ce9178"/><rect x="16.00" y="62.31" width="0.95" height="1.6" fill="#ce9178"/><rect x="17.20" y="62.31" width="0.95" height="1.6" fill="#ce9178"/><rect x="18.40" y="62.31" width="0.95" height="1.6" fill="#ce9178"/><rect x="19.60" y="62.31" width="0.95" height="1.6" fill="#d4d4d4"/><rect x="22.00" y="62.31" width="0.95" height="1.6" fill="#569cd6"/><rect x="23.20" y="62.31" width="0.95" height="1.6" fill="#569cd6"/><rect x="24.40" y="62.31" width="0.95" height="1.6" fill="#569cd6"/><rect x="25.60" y="62.31" width="0.95" height="1.6" fill="#569cd6"/><rect x="26.80" y="62.31" width="0.95" height="1.6" fill="#569cd6"/><rect x="28.00" y="62.31" width="0.95" height="1.6" fill="#569cd6"/><rect x="29.20" y="62.31" width="0.95" height="1.6" fill="#569cd6"/><rect x="30.40" y="62.31" width="0.95" height="1.6" fill="#569cd6"/><rect x="31.60" y="62.31" width="0.95" height="1.6" fill="#da70d6"/><rect x="32.80" y="62.31" width="0.95" height="1.6" fill="#9cdcfe"/><rect x="34.00" y="62.31" width="0.95" height="1.6" fill="#9cdcfe"/><rect x="35.20" y="62.31" width="0.95" height="1.6" fill="#9cdcfe"/><rect x="36.40" y="62.31" width="0.95" height="1.6" fill="#da70d6"/><rect x="37.60" y="62.31" width="0.95" height="1.6" fill="#da70d6"/><rect x="11.20" y="64.98" width="0.95" height="1.6" fill="#9cdcfe"/><rect x="12.40" y="64.98" width="0.95" height="1.6" fill="#9cdcfe"/><rect x="13.60" y="64.98" width="0.95" height="1.6" fill="#9cdcfe"/><rect x="14.80" y="64.98" width="0.95" height="1.6" fill="#9cdcfe"/><rect x="16.00" y="64.98" width="0.95" height="1.6" fill="#9cdcfe"/><rect x="17.20" y="64.98" width="0.95" height="1.6" fill="#9cdcfe"/><rect x="18.40" y="64.98" width="0.95" height="1.6" fill="#9cdcfe"/><rect x="19.60" y="64.98" width="0.95" height="1.6" fill="#d4d4d4"/><rect x="20.80" y="64.98" width="0.95" height="1.6" fill="#dcdcaa"/><rect x="22.00" y="64.98" width="0.95" height="1.6" fill="#dcdcaa"/><rect x="23.20" y="64.98" width="0.95" height="1.6" fill="#dcdcaa"/><rect x="24.40" y="64.98" width="0.95" height="1.6" fill="#179fff"/><rect x="25.60" y="64.98" width="0.95" height="1.6" fill="#9cdcfe"/><rect x="26.80" y="64.98" width="0.95" height="1.6" fill="#9cdcfe"/><rect x="28.00" y="64.98" width="0.95" height="1.6" fill="#9cdcfe"/><rect x="29.20" y="64.98" width="0.95" height="1.6" fill="#179fff"/><rect x="6.40" y="67.65" width="0.95" height="1.6" fill="#da70d6"/><rect x="7.60" y="67.65" width="0.95" height="1.6" fill="#ffd700"/><rect x="8.80" y="67.65" width="0.95" height="1.6" fill="#d4d4d4"/><rect x="10.00" y="67.65" width="0.95" height="1.6" fill="#dcdcaa"/><rect x="11.20" y="67.65" width="0.95" height="1.6" fill="#dcdcaa"/><rect x="12.40" y="67.65" width="0.95" height="1.6" fill="#dcdcaa"/><rect x="13.60" y="67.65" width="0.95" height="1.6" fill="#ffd700"/><rect x="14.80" y="67.65" width="0.95" height="1.6" fill="#ffd700"/></g></svg>
<div class="a" style="left:1261px;top:125px;width:19px;height:221px;background:#464646"></div>
<div class="a" style="left:1261px;top:125px;width:19px;height:3px;background:#6e6e6e"></div>
<div class="a" style="left:1266px;top:127px;width:10px;height:10px;background:#b8b8b8"></div>

<!-- status -->
<div id="status" class="a"></div>
<div class="a st" style="left:229px">0</div>
<div class="a st" style="left:631px;font-size:16.7px">Ln 1, Col 31</div>
<div class="a st" style="left:744px">Spaces: 4</div>
<div class="a st" style="left:836.5px;letter-spacing:0.2px">UTF-8</div>
<div class="a st" style="left:905px;letter-spacing:-0.6px">CRLF</div>
<div class="a st" style="left:965px;letter-spacing:5px">{}</div>
<div class="a st" style="left:992px">JavaScript</div>

<!-- taskbar -->
<div id="task" class="a"></div>
<div class="a" style="left:0;top:687px;width:41px;height:33px;background:#cdd5d0"></div>
<svg class="a" style="left:13px;top:697px" width="15" height="14" viewBox="0 0 15 14"><path d="M0 2 6.5 1v5.5H0zM7.5.9 15 0v6.5H7.5zM0 7.5h6.5V13L0 12zM7.5 7.5H15V14l-7.5-1z" fill="#111111"/></svg>
<div class="a" style="left:41px;top:687px;width:285px;height:33px;background:#ffffff"></div>
<svg class="a" style="left:50px;top:697px" width="15" height="14" viewBox="0 0 15 14" fill="none" stroke="#222222" stroke-width="1.3"><circle cx="9.5" cy="5.5" r="4.5"/><path d="M6.3 8.7 1 14"/></svg>
<div class="a" style="left:74px;top:694.5px;font-size:12.3px;color:#404040;line-height:20px;white-space:nowrap">Type here to search</div>
<svg class="a" style="left:340px;top:697px" width="14" height="14" viewBox="0 0 14 14"><circle cx="7" cy="7" r="5.8" fill="none" stroke="#111111" stroke-width="2"/></svg>
<svg class="a" style="left:379px;top:697px" width="15" height="14" viewBox="0 0 15 14" fill="none" stroke="#333333" stroke-width="1.1"><path d="M0 1h8M0 13h8M1.5 1v12M6.5 1v12M13.5 0v6M13.5 8v6"/><circle cx="13.5" cy="7" r=".9" fill="#333"/></svg>
<svg class="a" style="left:419px;top:695px" width="20" height="17" viewBox="0 0 20 17"><path d="M0 1h7l2 2h11v13H0z" fill="#f0c040"/><rect x="0" y="5" width="20" height="11" fill="#ffd75e"/><path d="M6 16v-4h8v4" fill="none" stroke="#2a7ad0" stroke-width="2.2"/></svg>
<svg class="a" style="left:461px;top:694px" width="20" height="20" viewBox="0 0 20 20"><rect width="20" height="20" fill="#4b3fd6"/><rect width="20" height="20" fill="url(#gm)"/><defs><linearGradient id="gm" x1="0" y1="1" x2="1" y2="0"><stop offset="0" stop-color="#5b2bd0"/><stop offset="1" stop-color="#2f8cf0"/></linearGradient></defs><path d="M4 15 9 5h2l-5 10zM9 15l5-10h2l-1 10h-2l.5-5-2.5 5z" fill="#ffffff"/></svg>
<svg class="a" style="left:503px;top:694px" width="21" height="21" viewBox="0 0 21 21"><circle cx="10.5" cy="10.5" r="10" fill="#db4437"/><path d="M10.5 10.5 1.8 5.5A10 10 0 0 0 8 20.2z" fill="#0f9d58"/><path d="M10.5 10.5 8 20.2A10 10 0 0 0 20.5 10.5z" fill="#ffcd40"/><circle cx="10.5" cy="10.5" r="4.3" fill="#ffffff"/><circle cx="10.5" cy="10.5" r="3.3" fill="#4285f4"/><circle cx="15" cy="15.5" r="5.5" fill="#5a5046"/><circle cx="15" cy="13.5" r="2.5" fill="#c9a080"/></svg>
<div class="a" style="left:534px;top:687px;width:38px;height:33px;background:#f3f3f3"></div>
<svg class="a" style="left:543px;top:694px" width="21" height="20" viewBox="0 0 100 100"><path fill="#1c88d8" d="M96 11 75 1c-2.4-1.2-5.3-.7-7.2 1.2L29 37.5 12.2 24.8c-1.6-1.2-3.8-1.1-5.2.2L1.5 30c-1.8 1.6-1.8 4.4 0 6L16 49.9 1.5 63.7c-1.8 1.6-1.8 4.4 0 6l5.5 5c1.5 1.3 3.7 1.4 5.2.2L29 62.2l38.8 35.4c1.9 1.9 4.8 2.4 7.2 1.2l21-10.1c2.2-1 3.6-3.3 3.6-5.7V16.8c0-2.5-1.4-4.7-3.6-5.8zM75 72.7 45.5 49.9 75 27z"/><path fill="#2ca3f2" d="M75 1c2.4-1.2 5.3-.7 7.2 1.2l14 6.8c2.2 1 3.6 3.3 3.6 5.7v70c0 2.5-1.4 4.7-3.6 5.8L75 99c-2.4 1.2-5.3.7-7.2-1.2L75 72.7V27z"/></svg>
<div class="a" style="left:586px;top:697px;width:17px;height:14px;background:#0a0a0a;border:1px solid #666"></div>
<div class="a" style="left:588px;top:699px;width:7px;height:1px;background:#bbbbbb"></div>
<svg class="a" style="left:626px;top:693px" width="20" height="20" viewBox="0 0 20 20"><path d="M6 2 17 1l2 15-11 3z" fill="#f4f4f4" stroke="#9a9a9a" stroke-width=".7"/><path d="M2 5 14 2l3 13-12 4z" fill="#8fcde0"/><path d="M2 5 14 2l.8 3.5-12 3z" fill="#5fb3cc"/></svg>
<div class="a" style="left:496px;top:718px;width:27px;height:2px;background:#2b7fd6"></div>
<div class="a" style="left:534px;top:718px;width:38px;height:2px;background:#2b7fd6"></div>
<div class="a" style="left:578px;top:718px;width:34px;height:2px;background:#2b7fd6"></div>
<div class="a" style="left:620px;top:718px;width:33px;height:2px;background:#2b7fd6"></div>
<!-- tray -->
<svg class="a" style="left:987px;top:696px" width="20" height="17" viewBox="0 0 20 17"><circle cx="10" cy="8" r="7.5" fill="#f6b13a"/><path d="M1 10h13M3 13h14M6 16h9" stroke="#e9ecef" stroke-width="1.6"/></svg>
<div class="a" style="left:1013px;top:695px;font-size:11.4px;color:#383838;line-height:20px;white-space:nowrap">31°C&nbsp; Haze</div>
<svg class="a" style="left:1085px;top:700px" width="12" height="8" viewBox="0 0 12 8"><path d="M1 7 6 1.5 11 7" fill="none" stroke="#222" stroke-width="1.3"/></svg>
<svg class="a" style="left:1105px;top:697px" width="12" height="14" viewBox="0 0 12 14" fill="none" stroke="#333" stroke-width="1.1"><rect x="1" y="1" width="7" height="12" rx="1"/><path d="M8 5l3-2v8l-3-2"/></svg>
<svg class="a" style="left:1123px;top:697px" width="15" height="14" viewBox="0 0 15 14" fill="none" stroke="#333" stroke-width="1.1"><path d="M1 5h3l4-4v12L4 9H1z"/><path d="M10 4c1 1.5 1 4.5 0 6M12 2c2 2.5 2 7.5 0 10"/></svg>
<svg class="a" style="left:1144px;top:699px" width="14" height="10" viewBox="0 0 14 10"><rect x="1" y="1" width="12" height="8" fill="none" stroke="#333" stroke-width="1.1"/><rect x="2" y="2" width="6" height="6" fill="#222"/><path d="M0 0h3" stroke="#333"/></svg>
<svg class="a" style="left:1164px;top:697px" width="14" height="14" viewBox="0 0 14 14" fill="none" stroke="#333" stroke-width="1.1"><rect x="3" y="2" width="10" height="8"/><path d="M8 10v3M5 13h6M1 1v9"/></svg>
<div class="a" style="left:1186px;top:687px;width:46px;font-size:10px;color:#222222;line-height:15px;text-align:center;white-space:nowrap;padding-top:2px">5:04 PM<br>5/23/2022</div>
<svg class="a" style="left:1246px;top:696px" width="22" height="22" viewBox="0 0 22 22"><path d="M1 1h13v9H6l-3 3v-3H1z" fill="#1a1a1a"/><path d="M3 3.5h9M3 5.5h9M3 7.5h9" stroke="#e6e6e6" stroke-width=".9"/><circle cx="14" cy="14" r="6.5" fill="#e6e6e6" stroke="#555" stroke-width="1"/><text x="14" y="17.5" font-size="9" text-anchor="middle" fill="#222" font-family="Liberation Sans">4</text></svg>

<!-- streamlabs widget -->
<div class="a" style="left:0;top:589px;width:221px;height:98px;background:#000600"></div>
<div class="a" style="left:0;top:589px;width:221px;height:25px;background:#e8eaed"></div>
<div class="a" style="left:0;top:614px;width:221px;height:1px;background:#d6d6d6"></div>
<div class="a" style="left:0;top:615px;width:221px;height:24px;background:#f1f3f4"></div>
<div class="a" style="left:0;top:638px;width:221px;height:1px;background:#d0d0d0"></div>
<div class="a" style="left:0;top:597px;width:11px;height:12px;background:#7fe0c8;border-radius:2px"></div>
<div class="a" style="left:2px;top:600px;width:6px;height:5px;background:#222"></div>
<div class="a" style="left:15.6px;top:593px;font-size:11.3px;color:#96999c;line-height:18px;white-space:nowrap;letter-spacing:-0.7px">Viewer Count Wid...</div>
<svg class="a" style="left:115px;top:589px" width="16" height="15" viewBox="0 0 16 15"><path d="M6 10 1.5 14" stroke="#111" stroke-width="1.4"/><path d="M9 13h5" stroke="#999" stroke-width="1"/><ellipse cx="9" cy="6.5" rx="5.5" ry="5" fill="#e01818" stroke="#5a0000" stroke-width=".8"/></svg>
<div class="a" style="left:159px;top:598px;width:9px;height:9px;border:1px solid #8a8a8a"></div>
<svg class="a" style="left:197px;top:598px" width="10" height="10" viewBox="0 0 10 10"><path d="M1 1l8 8M9 1 1 9" stroke="#8a8a8a" stroke-width="1"/></svg>
<div class="a" style="left:-2px;top:617px;width:24px;height:20px;border-radius:10px;background:#dfe1e5"></div>
<svg class="a" style="left:6px;top:622px" width="8" height="10" viewBox="0 0 8 10"><rect x="0" y="4" width="8" height="6" fill="#5f6368"/><path d="M2 4.5V3a2 2 0 0 1 4 0v1.5" fill="none" stroke="#5f6368" stroke-width="1.3"/></svg>
<div class="a" style="left:23px;top:617px;font-size:11.8px;color:#5f6368;line-height:20px;white-space:nowrap;letter-spacing:-0.2px">streamlabs.com/widgets/viewe...</div>
<svg class="a" style="left:200px;top:620px" width="13" height="13" viewBox="0 0 13 13" fill="none" stroke="#5f6368" stroke-width="1.3"><circle cx="5.5" cy="5.5" r="4.5"/><path d="M8.7 8.7 12.5 12.5M3.5 5.5h4M5.5 3.5v4"/></svg>
<svg class="a" style="left:16px;top:650px" width="41" height="29" viewBox="0 0 41 29"><rect x="0" y="0" width="41" height="29" rx="7" fill="#ff0000"/><path d="M15 8v13l11-6.5z" fill="#000600"/></svg>
<svg class="a" style="left:60px;top:640px" width="30" height="45" viewBox="0 0 30 45"><path d="M9.5 18.6 16.3 11.8H25.3V38.9H16.7V20.8L12.8 23.8Z" fill="#ff1010"/></svg>

<!-- notepad -->
<div class="a" style="left:1042px;top:571px;width:238px;height:116px;background:#ffffff;border-left:1.5px solid #0c0c0c;border-top:1.5px solid #0c0c0c"></div>
<svg class="a" style="left:1050px;top:578px" width="14" height="14" viewBox="0 0 14 14"><defs><linearGradient id="np" x1="0" y1="0" x2="1" y2="1"><stop offset="0" stop-color="#b8e4f2"/><stop offset="1" stop-color="#6cb8d4"/></linearGradient></defs><path d="M3 1h9.5v11.5L11.5 13H1.5z" fill="#f2f6f6" stroke="#9aa" stroke-width=".5"/><path d="M2.5 1.5h9v10.5H.8z" fill="url(#np)"/><path d="M2.5 1h9.5v1.3H2.3z" fill="#7d8d92"/></svg>
<div class="a" style="left:1066px;top:577px;font-size:10.3px;color:#999999;line-height:18px;white-space:nowrap">*Untitled - Notepad</div>
<div class="a" style="left:1048px;top:597px;font-size:10.3px;color:#555555;line-height:18px;white-space:nowrap">File</div><div class="a" style="left:1072.5px;top:597px;font-size:10.3px;color:#555555;line-height:18px;white-space:nowrap">Edit</div><div class="a" style="left:1099px;top:597px;font-size:10.3px;color:#555555;line-height:18px;white-space:nowrap">Format</div><div class="a" style="left:1140px;top:597px;font-size:10.3px;color:#555555;line-height:18px;white-space:nowrap">View</div><div class="a" style="left:1171px;top:597px;font-size:10.3px;color:#555555;line-height:18px;white-space:nowrap">Help</div>
<div class="a" style="left:1043px;top:612px;width:237px;height:1px;background:#f0f0f0"></div>
<div class="a" style="left:1048px;top:614.8px;font-family:'Liberation Mono',monospace;font-size:11.2px;letter-spacing:-0.18px;line-height:14.65px;color:#111111;white-space:pre;-webkit-text-stroke:0.1px #111">.setDuration('5')
.size("1280x720")
.fps(40)
.output(`./thumbnail/${Date.now() + ".gif"}`)
.on('end', function(err) {</div>

</body></html>
